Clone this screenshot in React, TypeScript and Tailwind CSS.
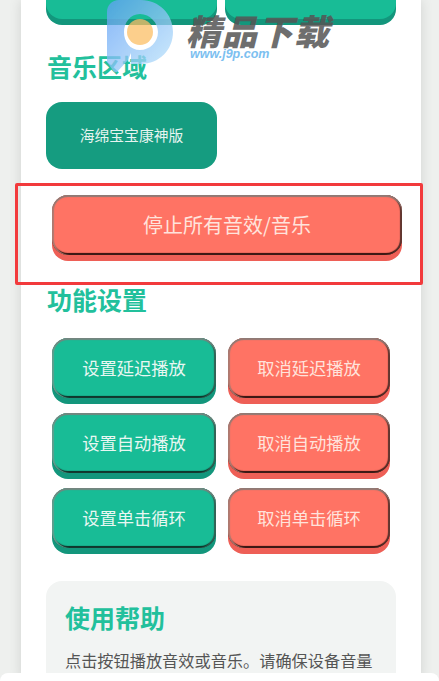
import React from "react";

const cjk = "font-['Noto_Sans_CJK_SC','Noto_Sans',sans-serif]";

const green =
  "bg-[#18bc96] shadow-[inset_0_2px_1px_#74857f,inset_2px_0_1px_#5f9f90,inset_-2px_0_1px_#2f5f52,inset_0_-2px_1px_#0c2a22,0_6px_0_#13967c]";
const red =
  "bg-[#ff7364] shadow-[inset_0_2px_1px_#8f7a75,inset_2px_0_1px_#b07a70,inset_-2px_0_1px_#5a302a,inset_0_-2px_1px_#2c0e0a,0_6px_0_#ee5f56]";

const settings = [
  ["设置延迟播放", "取消延迟播放"],
  ["设置自动播放", "取消自动播放"],
  ["设置单击循环", "取消单击循环"],
];

function Watermark() {
  return (
    <div className="absolute left-[107px] top-0 flex items-start">
      <svg width="66" height="74" viewBox="0 0 66 74" className="opacity-75">
        <defs>
          <linearGradient id="pg" x1="0" y1="0" x2="1" y2="1">
            <stop offset="0" stopColor="#5f9ff5" />
            <stop offset="1" stopColor="#bfe6fb" />
          </linearGradient>
        </defs>
        <path
          d="M0 12 C0 5 5 0 12 0 H34 C52 0 66 14 66 32 C66 50 52 64 34 64 H24 V53 L21 60 L10 72 C8 73 6 71 5 69 L0 62 Z M33 14 C23 14 17 23 17 32 C17 42 23 50 33 50 C43 50 51 42 51 32 C51 23 43 14 33 14 Z"
          fill="url(#pg)"
          fillRule="evenodd"
        />
        <circle cx="33" cy="32" r="13" fill="#fbbf66" />
      </svg>
      <div className="ml-[13px] flex flex-col">
        <span className={`${cjk} mt-[13px] text-[35px] leading-[34px] font-black italic tracking-[1px] whitespace-nowrap text-[#555] opacity-85`}>
          精品下载
        </span>
        <span className="ml-[4px] font-['Liberation_Sans',sans-serif] text-[12.5px] leading-[14px] font-bold italic text-[#7cc0f0]">
          www.j9p.com
        </span>
      </div>
    </div>
  );
}

export default function App() {
  return (
    <div className={`${cjk} relative h-[681px] w-[439px] overflow-hidden bg-[#eef0ee]`}>
      <div className="ml-[21px] flex h-full w-[400px] flex-col bg-white px-[25px] shadow-[0_0_12px_rgba(0,0,0,0.12)]">
        <div className="-mt-[42px] grid shrink-0 grid-cols-2 gap-[8px]">
          <div className="h-[61px] rounded-[16px] bg-[#18bc96] shadow-[0_6px_0_#13967c]" />
          <div className="h-[61px] rounded-[16px] bg-[#18bc96] shadow-[0_6px_0_#13967c]" />
        </div>

        <h2 className="mt-[29px] ml-[1px] shrink-0 text-[25px] leading-[36px] font-bold text-[#22c09c]">音乐区域</h2>

        <button className="mt-[18px] flex h-[67px] w-[171px] shrink-0 items-center justify-center rounded-[16px] bg-[#159c80] text-[14.8px] text-[#e6f4f0]">
          海绵宝宝康神版
        </button>

        <div className="mt-[26px] shrink-0 pl-[6px]">
          <button className={`flex h-[60px] w-[350px] items-center justify-center rounded-[16px] text-[20px] text-[#ffe3dc] ${red}`}>
            停止所有音效/音乐
          </button>
        </div>

        <h2 className="mt-[26px] ml-[1px] shrink-0 text-[25px] leading-[36px] font-bold text-[#22c09c]">功能设置</h2>

        <div className="mt-[21px] ml-[6px] flex w-[338px] shrink-0 flex-col gap-[15px]">
          {settings.map(([on, off]) => (
            <div key={on} className="grid grid-cols-[164px_162px] gap-[12px]">
              <button className={`flex h-[60px] items-center justify-center rounded-[16px] text-[17.3px] text-[#e8f7f2] ${green}`}>
                {on}
              </button>
              <button className={`flex h-[60px] items-center justify-center rounded-[16px] text-[17.3px] text-[#ffe3dc] ${red}`}>
                {off}
              </button>
            </div>
          ))}
        </div>

        <div className="mt-[33px] h-[140px] shrink-0 rounded-[16px] bg-[#f2f4f3] px-[19px] pt-[18px]">
          <h3 className="text-[25px] leading-[36px] font-bold text-[#22c09c]">使用帮助</h3>
          <p className="mt-[13px] text-[16.2px] leading-[24px] whitespace-nowrap text-[#555]">
            点击按钮播放音效或音乐。请确保设备音量
          </p>
        </div>
      </div>

      <Watermark />

      {/* annotation frame */}
      <div className="absolute left-[15px] top-[183px] h-[102px] w-[408px] rounded-[2px] border-[3px] border-[#f23a3c]" />

      {/* bottom sheet edge */}
      <div className="absolute bottom-0 left-0 h-[8px] w-full rounded-t-[14px] bg-white" />
    </div>
  );
}
